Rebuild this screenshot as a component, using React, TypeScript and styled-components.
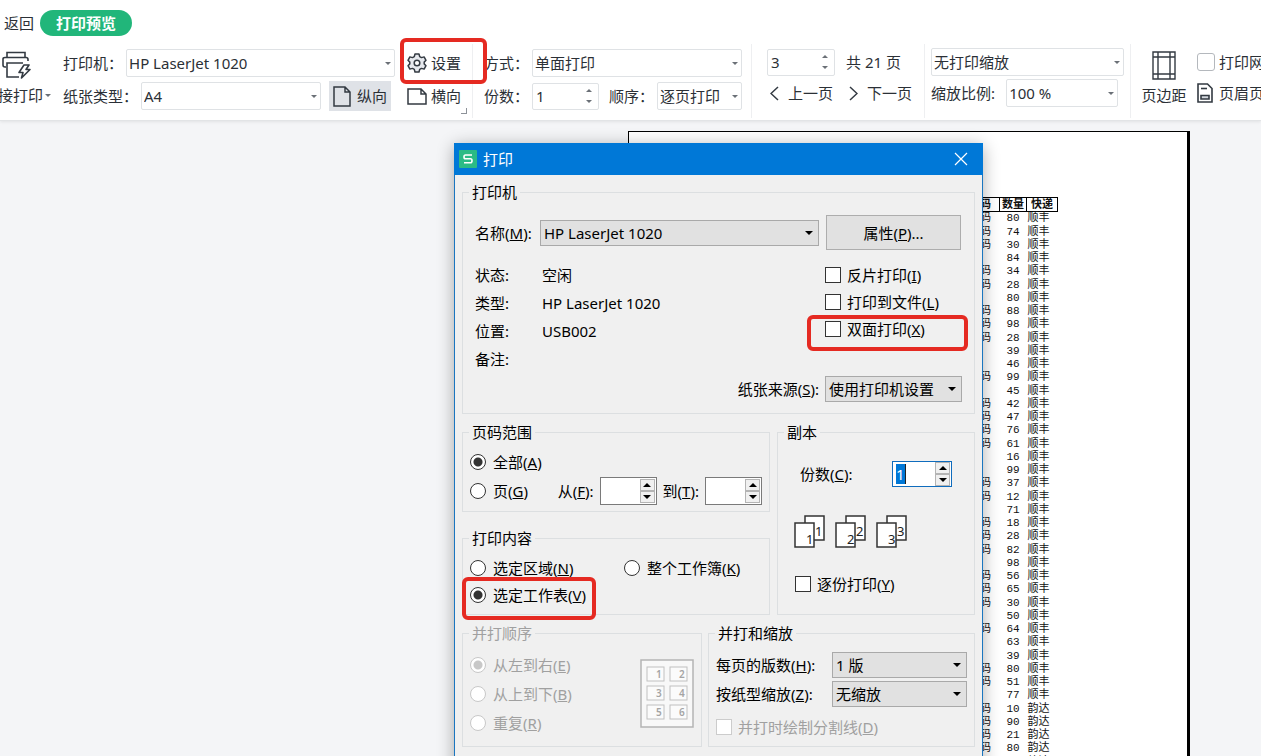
import React from 'react';
import styled, { createGlobalStyle, css } from 'styled-components';

const GlobalStyle = createGlobalStyle`
  * { box-sizing: border-box; }
  body {
    margin: 0;
    font-family: "Noto Sans", "Noto Sans CJK SC", sans-serif;
    font-size: 15px;
    line-height: 20px;
    color: #2b3036;
    background: #f4f5f7;
  }
  button, input, select { font: inherit; color: inherit; margin: 0; padding: 0; }
`;

/* ---------- shell ---------- */

const Shell = styled.div`
  position: relative;
  display: flex;
  flex-direction: column;
  height: 100vh;
  overflow: hidden;
`;

const Header = styled.header`
  flex: none;
  overflow: hidden;
  background: #fff;
  border-bottom: 1px solid #e2e4e6;
  box-shadow: 0 1px 3px rgba(0, 0, 0, 0.08);
`;

const TabRow = styled.nav`
  display: flex;
  align-items: center;
  gap: 6px;
  padding: 10px 4px 0;
`;

const PlainButton = styled.button<{ $gap?: number }>`
  display: flex;
  align-items: center;
  gap: ${(p) => p.$gap ?? 4}px;
  border: 0;
  background: none;
  white-space: nowrap;
`;

const PreviewTab = styled.button`
  height: 26px;
  padding: 0 16px;
  border: 0;
  border-radius: 13px;
  background: #21b67a;
  color: #fff;
  font-weight: 700;
`;

const Toolbar = styled.div`
  display: flex;
  align-items: flex-start;
  height: 84px;
  padding-top: 8px;
  white-space: nowrap;
`;

const ToolGroup = styled.div<{ $gap?: number; $top?: number; $left?: number; $right?: number; $divider?: boolean }>`
  flex: none;
  display: flex;
  flex-direction: column;
  gap: ${(p) => p.$gap ?? 5}px;
  height: 74px;
  padding: ${(p) => p.$top ?? 5}px ${(p) => p.$right ?? 8}px 0 ${(p) => p.$left ?? 0}px;
  border-right: 1px solid ${(p) => (p.$divider ? '#eeeff1' : 'transparent')};
`;

const ToolRow = styled.div<{ $gap?: number; $indent?: number }>`
  display: flex;
  align-items: center;
  gap: ${(p) => p.$gap ?? 3}px;
  height: 28px;
  padding-left: ${(p) => p.$indent ?? 0}px;
`;

const BigButton = styled.button<{ $width: number }>`
  flex: none;
  display: flex;
  flex-direction: column;
  align-items: center;
  gap: 5px;
  width: ${(p) => p.$width}px;
  padding-top: 7px;
  border: 0;
  background: none;
`;

const DirectPrint = styled(BigButton)`
  margin-left: -18px;
`;

const BigLabel = styled.span`
  display: flex;
  align-items: center;
  gap: 2px;
`;

const OrientationButton = styled(PlainButton)`
  height: 30px;
  margin-left: 5px;
  padding: 0 4px;
  background: #dfe2e7;
`;

const Launcher = styled.span`
  align-self: flex-end;
  width: 6px;
  height: 6px;
  margin-bottom: -4px;
  border: solid #8d9299;
  border-width: 0 1px 1px 0;
`;

/* ---------- form controls ---------- */

const SelectBox = styled.span<{ $width: number; $dialog?: boolean }>`
  flex: none;
  display: grid;
  align-items: center;
  width: ${(p) => p.$width}px;

  select {
    grid-area: 1 / 1;
    width: 100%;
    height: ${(p) => (p.$dialog ? 26 : 28)}px;
    padding-left: ${(p) => (p.$dialog ? 3 : 2)}px;
    appearance: none;
    border: 1px solid #dfe2e5;
    border-radius: 2px;
    background: #fff;
    ${(p) => p.$dialog && css`
      border-color: #a9a9a9;
      border-radius: 0;
      background: #e1e1e1;
      color: #000;
    `}
  }

  svg {
    grid-area: 1 / 1;
    justify-self: end;
    margin-right: ${(p) => (p.$dialog ? 6 : 4)}px;
    pointer-events: none;
  }
`;

const Stepper = styled.span<{ $width: number; $height?: number; $look?: 'dialog' | 'focus' }>`
  flex: none;
  display: flex;
  align-items: center;
  width: ${(p) => p.$width}px;
  height: ${(p) => p.$height ?? 27}px;
  border: 1px solid ${(p) => (p.$look === 'focus' ? '#0f6cbd' : p.$look ? '#7a7a7a' : '#dfe2e5')};
  border-radius: ${(p) => (p.$look ? 0 : 2)}px;
  background: #fff;

  input {
    flex: 1;
    min-width: 0;
    height: 20px;
    padding-left: 3px;
    border: 0;
    outline: 0;
    background: transparent;
  }
`;

const SelectedInput = styled.input`
  && {
    flex: none;
    width: 10px;
    margin: 0 auto 0 3px;
    padding: 0;
    background: #0078d7;
    color: #fff;
    border-right: 1px solid #222;
  }
`;

const Arrows = styled.span<{ $boxed?: boolean }>`
  display: flex;
  flex-direction: column;
  width: ${(p) => (p.$boxed ? 15 : 10)}px;
  margin-right: ${(p) => (p.$boxed ? 1 : 4)}px;

  button {
    display: flex;
    align-items: center;
    justify-content: center;
    height: ${(p) => (p.$boxed ? 12 : 11)}px;
    border: ${(p) => (p.$boxed ? '1px solid #b4b4b4' : '0')};
    background: ${(p) => (p.$boxed ? '#f0f0f0' : 'none')};
  }
`;

const Triangle = ({ up, color = '#6b7077', size = 6 }: { up?: boolean; color?: string; size?: number }) => (
  <svg width={size} height={size / 2} viewBox="0 0 8 4" aria-hidden="true">
    <path d={up ? 'M0 4L4 0L8 4Z' : 'M0 0H8L4 4Z'} fill={color} />
  </svg>
);

type DropProps = { label: string; id?: string; value: string; width: number; dialog?: boolean };
const Drop = ({ label, id, value, width, dialog }: DropProps) => (
  <SelectBox $width={width} $dialog={dialog}>
    <select id={id} aria-label={label} defaultValue={value}>
      <option>{value}</option>
    </select>
    <Triangle color={dialog ? '#000' : undefined} size={dialog ? 8 : 6} />
  </SelectBox>
);

type SpinProps = { label: string; id?: string; value?: string; width: number; height?: number; look?: 'dialog' | 'focus' };
const Spin = ({ label, id, value = '', width, height, look }: SpinProps) => {
  const Field = look === 'focus' ? SelectedInput : 'input';
  const color = look ? '#000' : undefined;
  const size = look ? 8 : 6;
  return (
    <Stepper $width={width} $height={height} $look={look}>
      <Field id={id} aria-label={label} defaultValue={value} />
      <Arrows $boxed={!!look}>
        <button type="button" aria-label={`${label} +`}><Triangle up color={color} size={size} /></button>
        <button type="button" aria-label={`${label} -`}><Triangle color={color} size={size} /></button>
      </Arrows>
    </Stepper>
  );
};

const Check = styled.input.attrs({ type: 'checkbox' })<{ $soft?: boolean }>`
  flex: none;
  appearance: none;
  width: ${(p) => (p.$soft ? 18 : 16)}px;
  height: ${(p) => (p.$soft ? 18 : 16)}px;
  border: 1px solid ${(p) => (p.$soft ? '#b4b8bd' : '#333')};
  border-radius: ${(p) => (p.$soft ? 3 : 0)}px;
  background: #fff;
  &:disabled { border-color: #ccc; }
`;

const Radio = styled.input.attrs({ type: 'radio' })`
  flex: none;
  appearance: none;
  width: 16px;
  height: 16px;
  border: 1px solid #333;
  border-radius: 50%;
  background: #fff;
  &:checked { background: radial-gradient(circle, #333 0 4px, #fff 5px); }
  &:disabled { border-color: #c8c8c8; }
  &:disabled:checked { background: radial-gradient(circle, #c8c8c8 0 4px, #fff 5px); }
`;

const Option = styled.label<{ $gap?: number; $height?: number; $muted?: boolean }>`
  display: flex;
  align-items: center;
  gap: ${(p) => p.$gap ?? 7}px;
  height: ${(p) => p.$height ?? 27}px;
  white-space: nowrap;
  ${(p) => p.$muted && css`color: #a0a0a0;`}
`;

const Hot = ({ text, k, end = '' }: { text: string; k: string; end?: string }) => (
  <span>{text}(<u>{k}</u>){end}</span>
);

/* ---------- preview sheet ---------- */

const Workspace = styled.main`
  flex: 1;
  display: flex;
  justify-content: flex-end;
  min-height: 0;
  padding: 10px 71px 0 0;
`;

const Sheet = styled.section`
  display: flex;
  justify-content: flex-end;
  align-items: flex-start;
  width: 562px;
  padding: 65px 129px 0 0;
  border: solid #000;
  border-width: 1px 3px 0 1px;
  background: #fff;
`;

const DataTable = styled.table`
  border-collapse: collapse;
  table-layout: fixed;
  width: 86px;
  color: #111;
  font-family: "Liberation Mono", "Noto Sans CJK SC", monospace;
  font-size: 11px;
  line-height: 13px;

  th { height: 14px; padding: 0; border: 1px solid #000; line-height: 12px; font-weight: 700; white-space: nowrap; }
  td { height: 13px; padding: 0; text-align: center; white-space: nowrap; }
  td:last-child { text-align: left; padding-left: 1px; }
  tr.tall td { height: 14px; }
`;

/* ---------- dialog ---------- */

const Dialog = styled.section`
  position: absolute;
  top: 143px;
  right: 278px;
  width: 529px;
  border: 1px solid #1a76c0;
  background: #f0f0f0;
  color: #000;
  box-shadow: 0 3px 16px rgba(0, 0, 0, 0.32);
`;

const TitleBar = styled.header`
  display: flex;
  align-items: center;
  gap: 6px;
  height: 32px;
  margin: -1px -1px 0;
  padding: 0 15px 0 5px;
  background: #0078d7;
  color: #fff;

  h1 { flex: 1; margin: 0; font-size: 15px; font-weight: 400; }
`;

const DialogBody = styled.form`
  display: flex;
  flex-direction: column;
  gap: 8px;
  padding: 7px 7px 60px;
`;

const Columns = styled.div<{ $gap: number }>`
  display: flex;
  gap: ${(p) => p.$gap}px;
`;

const Stack = styled.div`
  display: flex;
  flex-direction: column;
  gap: 16px;
`;

const Group = styled.fieldset<{ $width?: number; $height: number; $top: number; $right?: number; $muted?: boolean }>`
  flex: ${(p) => (p.$width ? 'none' : '1 0 auto')};
  width: ${(p) => (p.$width ? `${p.$width}px` : 'auto')};
  min-width: 0;
  height: ${(p) => p.$height}px;
  margin: 0;
  padding: ${(p) => p.$top}px ${(p) => p.$right ?? 7}px 0 7px;
  border: 1px solid #dcdfe1;
  color: ${(p) => (p.$muted ? '#a0a0a0' : '#000')};
  white-space: nowrap;

  legend { height: 20px; margin-left: -1px; padding: 0 3px; }
`;

const Line = styled.div<{ $height?: number; $gap?: number; $indent?: number; $justify?: string }>`
  display: flex;
  align-items: center;
  justify-content: ${(p) => p.$justify ?? 'flex-start'};
  gap: ${(p) => p.$gap ?? 0}px;
  height: ${(p) => p.$height ?? 28}px;
  padding-left: ${(p) => p.$indent ?? 0}px;
`;

const Caption = styled.label<{ $width?: number }>`
  flex: none;
  width: ${(p) => (p.$width ? `${p.$width}px` : 'auto')};
`;

const OptionCell = styled.div`
  flex: none;
  width: 154px;
`;

const Properties = styled.button`
  width: 135px;
  height: 35px;
  margin-left: 7px;
  border: 1px solid #adadad;
  background: #e1e1e1;
`;

const Details = styled.div`
  display: flex;
  justify-content: space-between;
  height: 126px;
  padding: 11px 0 0 5px;
`;

const Facts = styled.dl`
  display: grid;
  grid-template-columns: 67px auto;
  grid-template-rows: repeat(4, 28px);
  align-items: center;
  margin: 0;
  dd { margin: 0; }
`;

const Switches = styled.div`
  width: 137px;
`;

const CopyPages = styled.div`
  display: flex;
  gap: 10px;
  padding: 27px 0 22px 9px;
`;

const CollateLine = styled(Line)`
  height: 27px;
`;

const Dismiss = styled.button`
  display: flex;
  border: 0;
  background: none;
`;

const Marker = styled.div<{ $x: number; $y: number; $w: number; $h: number }>`
  position: absolute;
  top: ${(p) => p.$y}px;
  left: ${(p) => p.$x}px;
  width: ${(p) => p.$w}px;
  height: ${(p) => p.$h}px;
  border: 4px solid #e52a22;
  border-radius: 6px;
  pointer-events: none;
`;

/* ---------- icons ---------- */

const PrinterIcon = () => (
  <svg width="30" height="29" viewBox="0 0 30 29" fill="none" stroke="#333a42" strokeWidth="1.6">
    <path d="M5 6V1.500H23V6M4 16H3Q1 16 1 14V8Q1 6.500 3 6.500H24Q26 6.500 26 8.500V10" />
    <path d="M17 26H5V12H21" />
    <path d="M22 14L17 21.500H21L19.500 27L28 18.500H24L27 14Z" strokeLinejoin="round" />
  </svg>
);
const PageIcon = ({ wide }: { wide?: boolean }) =>
  wide ? (
    <svg width="20" height="17" viewBox="0 0 20 17" fill="none" stroke="#333a42" strokeWidth="1.5">
      <path d="M1 1H14L19 6V16H1ZM14 1V6H19" />
    </svg>
  ) : (
    <svg width="18" height="21" viewBox="0 0 18 21" fill="none" stroke="#333a42" strokeWidth="1.5">
      <path d="M1 1H12L17 6V20H1ZM12 1V6H17" />
    </svg>
  );
const GearIcon = () => (
  <svg width="20" height="20" viewBox="0 0 20 20" fill="#e6e9ee" stroke="#333a42" strokeWidth="1.5" strokeLinejoin="round">
    <path d="M8 1H12L12.700 3.600L14.500 4.600L17.100 3.900L19 7.300L17.200 9.100V10.900L19 12.700L17.100 16.100L14.500 15.400L12.700 16.400L12 19H8L7.300 16.400L5.500 15.400L2.900 16.100L1 12.700L2.800 10.900V9.100L1 7.300L2.900 3.900L5.500 4.600L7.300 3.600Z" />
    <circle cx="10" cy="10" r="2.800" fill="#fff" />
  </svg>
);
const Chevron = ({ right }: { right?: boolean }) => (
  <svg width="9" height="15" viewBox="0 0 9 15" fill="none" stroke="#333a42" strokeWidth="1.5">
    <path d={right ? 'M1 1L8 7.500L1 14' : 'M8 1L1 7.500L8 14'} />
  </svg>
);
const MarginIcon = () => (
  <svg width="24" height="29" viewBox="0 0 24 29" fill="none" stroke="#333a42" strokeWidth="1.4">
    <path d="M1 1H23V28H1ZM6 1V28M18 1V28M1 6H23M1 23H23" />
  </svg>
);
const HeaderFooterIcon = () => (
  <svg width="16" height="20" viewBox="0 0 16 20" fill="none" stroke="#333a42" strokeWidth="1.6">
    <path d="M1 1H10.500L15 5.500V19H1Z" />
    <path d="M4 5.500H10" />
    <path d="M4 12.500H12V16H4Z" fill="#d5d9df" />
  </svg>
);
const AppIcon = () => (
  <svg width="18" height="18" viewBox="0 0 18 18">
    <rect width="18" height="18" rx="1" fill="#2bbb85" />
    <path d="M13 5H6.500Q5 5 5 6.900T6.500 8.800H11.500Q13 8.800 13 10.800T11.500 12.800H5" fill="none" stroke="#fff" strokeWidth="1.6" />
  </svg>
);
const CopyIcon = ({ n }: { n: number }) => (
  <svg width="31" height="33" viewBox="0 0 31 33" fontFamily="Noto Sans, sans-serif" fontSize="13" fill="#222">
    <rect x="11" y="1" width="19" height="24" fill="#fff" stroke="#333" strokeWidth="1.5" />
    <text x="21" y="21">{n}</text>
    <rect x="1" y="8" width="19" height="24" fill="#fff" stroke="#333" strokeWidth="1.5" />
    <text x="12" y="29">{n}</text>
  </svg>
);
const TilingIcon = () => (
  <svg width="54" height="69" viewBox="0 0 54 69" fontFamily="Noto Sans, sans-serif" fontSize="10" fontWeight="600" fill="#a4a4a4">
    <rect x="1" y="1" width="52" height="67" fill="#f8f8f8" stroke="#b4b4b4" strokeWidth="1.5" />
    {[1, 2, 3, 4, 5, 6].map((n, i) => (
      <g key={n} transform={`translate(${7 + (i % 2) * 23} ${8 + Math.floor(i / 2) * 19})`}>
        <rect width="17" height="14" fill="#fbfbfb" stroke="#c0c0c0" />
        <text x="9" y="11">{n}</text>
      </g>
    ))}
  </svg>
);

const quantities = [80, 74, 30, 84, 34, 28, 80, 88, 98, 28, 39, 46, 99, 45, 42, 47, 76, 61, 16, 99, 37, 12, 71, 18, 28, 82, 98, 56, 65, 30, 50, 64, 63, 39, 80, 51, 77, 10, 90, 21, 80, 31];
const blankRows = [3, 6, 10, 11, 13, 18, 19, 22, 26, 30, 32, 33, 36];

const PrintDialog = () => (
  <Dialog role="dialog" aria-label="打印">
    <TitleBar>
      <AppIcon />
      <h1>打印</h1>
      <Dismiss type="button" aria-label="关闭">
        <svg width="14" height="14" viewBox="0 0 14 14" stroke="#fff" strokeWidth="1.2"><path d="M1 1L13 13M13 1L1 13" /></svg>
      </Dismiss>
    </TitleBar>
    <DialogBody>
      <Group $height={232} $top={13} $right={12}>
        <legend>打印机</legend>
        <Line $height={35} $indent={5}>
          <Caption htmlFor="printer" $width={65}><Hot text="名称" k="M" end=":" /></Caption>
          <Drop id="printer" label="名称" value="HP LaserJet 1020" width={279} dialog />
          <Properties type="button"><Hot text="属性" k="P" end="..." /></Properties>
        </Line>
        <Details>
          <Facts>
            <dt>状态:</dt><dd>空闲</dd>
            <dt>类型:</dt><dd>HP LaserJet 1020</dd>
            <dt>位置:</dt><dd>USB002</dd>
            <dt>备注:</dt><dd />
          </Facts>
          <Switches>
            <Option $gap={6}><Check /><Hot text="反片打印" k="I" /></Option>
            <Option $gap={6}><Check /><Hot text="打印到文件" k="L" /></Option>
            <Option $gap={6}><Check /><Hot text="双面打印" k="X" /></Option>
          </Switches>
        </Details>
        <Line $height={26} $gap={6} $justify="flex-end">
          <Caption htmlFor="source"><Hot text="纸张来源" k="S" end=":" /></Caption>
          <Drop id="source" label="纸张来源" value="使用打印机设置" width={137} dialog />
        </Line>
      </Group>

      <Columns $gap={7}>
        <Stack>
          <Group $width={308} $height={90} $top={6}>
            <legend>页码范围</legend>
            <Option $height={28}><Radio name="range" defaultChecked /><Hot text="全部" k="A" /></Option>
            <Line $height={30} $justify="space-between">
              <Option><Radio name="range" /><Hot text="页" k="G" /></Option>
              <Line $gap={6}>
                <Caption htmlFor="from"><Hot text="从" k="F" end=":" /></Caption>
                <Spin id="from" label="从" width={57} height={28} look="dialog" />
                <Caption htmlFor="to"><Hot text="到" k="T" end=":" /></Caption>
                <Spin id="to" label="到" width={57} height={28} look="dialog" />
              </Line>
            </Line>
          </Group>
          <Group $width={308} $height={87} $top={6}>
            <legend>打印内容</legend>
            <Line $height={27}>
              <OptionCell><Option><Radio name="content" /><Hot text="选定区域" k="N" /></Option></OptionCell>
              <Option><Radio name="content" /><Hot text="整个工作簿" k="K" /></Option>
            </Line>
            <Option><Radio name="content" defaultChecked /><Hot text="选定工作表" k="V" /></Option>
          </Group>
        </Stack>
        <Group $height={193} $top={18} $right={22}>
          <legend>副本</legend>
          <Line $justify="space-between" $indent={15}>
            <Caption htmlFor="copies"><Hot text="份数" k="C" end=":" /></Caption>
            <Spin id="copies" label="份数" value="1" width={60} height={26} look="focus" />
          </Line>
          <CopyPages><CopyIcon n={1} /><CopyIcon n={2} /><CopyIcon n={3} /></CopyPages>
          <CollateLine $indent={10}>
            <Option $gap={6}><Check /><Hot text="逐份打印" k="Y" /></Option>
          </CollateLine>
        </Group>
      </Columns>

      <Columns $gap={6}>
        <Group $width={240} $height={124} $top={7} $muted disabled>
          <legend>并打顺序</legend>
          <Line $justify="space-between" $height={87}>
            <div>
              <Option $height={29}><Radio name="order" defaultChecked /><Hot text="从左到右" k="E" /></Option>
              <Option $height={29}><Radio name="order" /><Hot text="从上到下" k="B" /></Option>
              <Option $height={29}><Radio name="order" /><Hot text="重复" k="R" /></Option>
            </div>
            <TilingIcon />
          </Line>
        </Group>
        <Group $height={124} $top={7}>
          <legend>并打和缩放</legend>
          <Line $justify="space-between" $height={29}>
            <Caption htmlFor="tiles"><Hot text="每页的版数" k="H" end=":" /></Caption>
            <Drop id="tiles" label="每页的版数" value="1 版" width={135} dialog />
          </Line>
          <Line $justify="space-between" $height={29}>
            <Caption htmlFor="fit"><Hot text="按纸型缩放" k="Z" end=":" /></Caption>
            <Drop id="fit" label="按纸型缩放" value="无缩放" width={135} dialog />
          </Line>
          <Option $gap={6} $height={38} $muted><Check disabled /><Hot text="并打时绘制分割线" k="D" /></Option>
        </Group>
      </Columns>
    </DialogBody>
  </Dialog>
);

export default function App() {
  return (
    <Shell>
      <GlobalStyle />
      <Header>
        <TabRow>
          <PlainButton type="button">返回</PlainButton>
          <PreviewTab type="button">打印预览</PreviewTab>
        </TabRow>
        <Toolbar>
          <DirectPrint type="button" $width={70}>
            <PrinterIcon />
            <BigLabel>直接打印 <Triangle /></BigLabel>
          </DirectPrint>
          <ToolGroup $left={11} $right={11}>
            <ToolRow>
              <label htmlFor="device">打印机：</label>
              <Drop id="device" label="打印机" value="HP LaserJet 1020" width={269} />
            </ToolRow>
            <ToolRow>
              <label htmlFor="paper">纸张类型：</label>
              <Drop id="paper" label="纸张类型" value="A4" width={180} />
              <OrientationButton type="button" $gap={6}><PageIcon />纵向</OrientationButton>
            </ToolRow>
          </ToolGroup>
          <ToolGroup $right={5} $divider>
            <ToolRow><PlainButton type="button"><GearIcon />设置</PlainButton></ToolRow>
            <ToolRow $gap={0}>
              <PlainButton type="button"><PageIcon wide />横向</PlainButton>
              <Launcher />
            </ToolRow>
          </ToolGroup>
          <ToolGroup $left={11} $right={9} $divider>
            <ToolRow>
              <label htmlFor="mode">方式：</label>
              <Drop id="mode" label="方式" value="单面打印" width={210} />
            </ToolRow>
            <ToolRow $gap={10}>
              <ToolRow>
                <label htmlFor="count">份数：</label>
                <Spin id="count" label="份数" value="1" width={67} />
              </ToolRow>
              <ToolRow>
                <label htmlFor="collate">顺序：</label>
                <Drop id="collate" label="顺序" value="逐页打印" width={85} />
              </ToolRow>
            </ToolRow>
          </ToolGroup>
          <ToolGroup $left={15} $right={12} $gap={3} $top={4} $divider>
            <ToolRow $gap={11}><Spin label="页码" value="3" width={68} /><span>共 21 页</span></ToolRow>
            <ToolRow $gap={16} $indent={3}>
              <PlainButton type="button" $gap={9}><Chevron />上一页</PlainButton>
              <PlainButton type="button" $gap={9}><Chevron right />下一页</PlainButton>
            </ToolRow>
          </ToolGroup>
          <ToolGroup $left={6} $right={6} $gap={3} $top={4} $divider>
            <ToolRow><Drop label="打印缩放" value="无打印缩放" width={193} /></ToolRow>
            <ToolRow $gap={11}>
              <label htmlFor="ratio">缩放比例:</label>
              <Drop id="ratio" label="缩放比例" value="100 %" width={112} />
            </ToolRow>
          </ToolGroup>
          <BigButton type="button" $width={66}><MarginIcon />页边距</BigButton>
          <ToolGroup $gap={3} $top={4}>
            <ToolRow><Option $gap={4}><Check $soft />打印网格线</Option></ToolRow>
            <ToolRow><PlainButton type="button" $gap={6}><HeaderFooterIcon />页眉页脚</PlainButton></ToolRow>
          </ToolGroup>
        </Toolbar>
      </Header>

      <Workspace>
        <Sheet>
          <DataTable>
            <colgroup><col width="28" /><col width="27" /><col width="31" /></colgroup>
            <thead><tr><th>码</th><th>数量</th><th>快递</th></tr></thead>
            <tbody>
              {quantities.map((q, i) => (
                <tr key={i} className={i % 4 === 0 ? 'tall' : undefined}>
                  <td>{blankRows.includes(i) ? '' : '码'}</td>
                  <td>{q}</td>
                  <td>{i < 37 ? '顺丰' : '韵达'}</td>
                </tr>
              ))}
            </tbody>
          </DataTable>
        </Sheet>
      </Workspace>

      <PrintDialog />
      <Marker $x={400} $y={38} $w={87} $h={46} />
      <Marker $x={807} $y={315} $w={161} $h={36} />
      <Marker $x={462} $y={577} $w={134} $h={43} />
    </Shell>
  );
}
